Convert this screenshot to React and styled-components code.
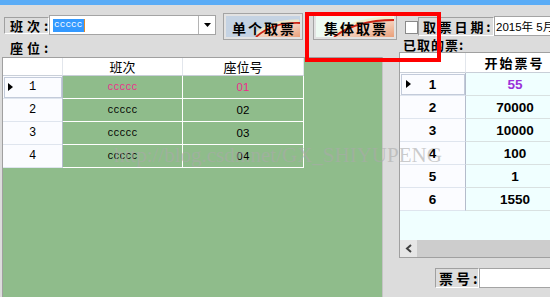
import React from "react";
import styled, { createGlobalStyle } from "styled-components";

const CJK = `"Noto Sans CJK SC", "Liberation Sans", sans-serif`;

const Global = createGlobalStyle`
  html, body { margin: 0; padding: 0; background: #dcdcdc; }
  body { font-family: "Liberation Sans", Arial, sans-serif; }
  #root { width: 550px; height: 297px; }
`;

const Window = styled.div`
  position: relative;
  width: 550px;
  height: 297px;
  overflow: hidden;
  background: #dcdcdc;
  display: flex;
  flex-direction: column;
`;

const TitleStrip = styled.div`
  height: 5px;
  flex-shrink: 0;
  background: #5aacf6;
`;

const Toolbar = styled.div`
  display: flex;
  align-items: flex-start;
  height: 35px;
  flex-shrink: 0;
`;

const SunkenLabel = styled.div`
  box-sizing: border-box;
  flex-shrink: 0;
  width: ${(p) => p.$w}px;
  height: ${(p) => p.$h}px;
  margin-top: ${(p) => p.$mt || 0}px;
  margin-left: ${(p) => p.$ml || 0}px;
  padding-left: ${(p) => p.$pl || 4}px;
  border-top: 1px solid #a0a0a0;
  border-left: 1px solid #a0a0a0;
  border-bottom: 1px solid #ffffff;
  border-right: 1px solid #ffffff;
  display: flex;
  align-items: center;
  font-family: ${CJK};
  font-weight: 700;
  font-size: ${(p) => p.$fs || 14}px;
  line-height: 1;
  letter-spacing: ${(p) => p.$ls || 0}px;
  color: #000;
  white-space: nowrap;
`;

const Combo = styled.div`
  box-sizing: border-box;
  flex-shrink: 0;
  width: 167px;
  height: 20px;
  margin-top: 10px;
  background: #fff;
  border: 1px solid #a4a4a4;
  display: flex;
`;

const ComboText = styled.div`
  flex: 1;
  display: flex;
  align-items: center;
  padding-left: 3px;
`;

const Selected = styled.span`
  display: inline-block;
  height: 13px;
  line-height: 12px;
  padding: 0 1px 0 1px;
  background: #3399ff;
  color: #fff;
  font-family: "Liberation Mono", monospace;
  font-size: 9.5px;
  border-right: 1px solid #e08a2c;
`;

const ComboArrow = styled.div`
  width: 16px;
  border-left: 1px solid #b4b4b4;
  display: flex;
  align-items: center;
  justify-content: center;
`;

const ImageButton = styled.button`
  box-sizing: border-box;
  flex-shrink: 0;
  width: ${(p) => p.$w}px;
  height: 27px;
  margin-left: ${(p) => p.$ml}px;
  margin-top: 8px;
  padding: 2px;
  border: 1px solid #a4a4a4;
  background: #e2e2e2;
  display: flex;
  cursor: pointer;
`;

const ButtonFace = styled.span`
  position: relative;
  flex: 1;
  overflow: hidden;
  background: ${(p) => p.$bg};
  display: flex;
  align-items: center;
  justify-content: center;
  font-family: ${CJK};
  font-weight: 700;
  font-size: 14px;
  letter-spacing: 2px;
  color: #000;
`;

const ButtonArt = styled.svg`
  position: absolute;
  left: 0;
  top: 0;
  width: 100%;
  height: 100%;
`;

const ButtonText = styled.span`
  position: relative;
  padding-top: 2px;
  padding-left: 2px;
  line-height: 1;
`;

const CheckBox = styled.span`
  box-sizing: border-box;
  flex-shrink: 0;
  width: 13px;
  height: 13px;
  margin-left: 8px;
  margin-top: 16px;
  background: #fff;
  border: 1px solid #8a8a8a;
`;

const DateBox = styled.div`
  box-sizing: border-box;
  flex-shrink: 0;
  width: 70px;
  height: 20px;
  margin-top: 11px;
  padding-left: 1px;
  background: #fff;
  border: 1px solid #a4a4a4;
  display: flex;
  align-items: center;
  font-family: "Liberation Sans", ${CJK};
  font-size: 11.5px;
  color: #000;
  white-space: nowrap;
`;

const Main = styled.div`
  flex: 1;
  display: flex;
  min-height: 0;
`;

const LeftCol = styled.div`
  width: 383px;
  flex-shrink: 0;
  display: flex;
  flex-direction: column;
`;

const PlainLabel = styled.div`
  height: ${(p) => p.$h}px;
  padding-left: ${(p) => p.$pl}px;
  font-family: ${CJK};
  font-weight: 700;
  font-size: 13px;
  line-height: ${(p) => p.$h - 2}px;
  letter-spacing: ${(p) => p.$ls}px;
  color: #000;
  white-space: nowrap;
`;

const GreenGrid = styled.div`
  flex: 1;
  margin-left: 2px;
  background: #8fbc8b;
  border-top: 1px solid #a0a0a0;
  border-left: 1px solid #a0a0a0;
  border-right: 1px solid #c4c4c4;
`;

const LeftTable = styled.div`
  display: grid;
  grid-template-columns: 60px 120px 121px;
  grid-auto-rows: 23px;
  grid-template-rows: 18px;
`;

const HeadCell = styled.div`
  box-sizing: border-box;
  background: #fff;
  border-right: 1px solid #e2e6ec;
  border-bottom: 1px solid #c9cfd8;
  display: flex;
  align-items: center;
  justify-content: center;
  font-family: ${CJK};
  font-size: ${(p) => p.$fs || 13}px;
  font-weight: ${(p) => p.$fw || 400};
  letter-spacing: ${(p) => p.$ls || 0}px;
  color: #000;
`;

const RowHead = styled.div`
  box-sizing: border-box;
  position: relative;
  background: #fbfcff;
  border-right: 1px solid #b4bccb;
  border-bottom: 1px solid #dfe5ee;
  outline: ${(p) => (p.$active ? "1px solid #c3cbda" : "none")};
  outline-offset: -2px;
  display: flex;
  align-items: center;
  justify-content: center;
  font-family: ${(p) => (p.$bold ? `"Liberation Sans", sans-serif` : `"Liberation Mono", monospace`)};
  font-weight: ${(p) => (p.$bold ? 700 : 400)};
  font-size: ${(p) => (p.$bold ? 13.5 : 12)}px;
  color: #000;
`;

const Pointer = styled.span`
  position: absolute;
  left: ${(p) => p.$left}px;
  top: 50%;
  margin-top: -4px;
  width: 0;
  height: 0;
  border-top: 4px solid transparent;
  border-bottom: 4px solid transparent;
  border-left: 5px solid #000;
`;

const GreenCell = styled.div`
  box-sizing: border-box;
  border-right: 1px solid #ffffff;
  border-bottom: 1px solid #ffffff;
  display: flex;
  align-items: center;
  justify-content: center;
  font-family: ${(p) => (p.$mono ? `"Liberation Mono", monospace` : `"Liberation Sans", sans-serif`)};
  font-size: ${(p) => (p.$mono ? 10 : 11.5)}px;
  color: ${(p) => (p.$hot ? "#ee2a8c" : "#000")};
`;

const RightCol = styled.div`
  margin-left: 16px;
  width: 180px;
  flex-shrink: 0;
  display: flex;
  flex-direction: column;
`;

const RightGrid = styled.div`
  box-sizing: border-box;
  height: 206px;
  border: 1px solid #a0a0a0;
  background: #f0ffff;
  display: flex;
  flex-direction: column;
`;

const RGRow = styled.div`
  display: grid;
  grid-template-columns: 66px 98px 1fr;
  height: ${(p) => p.$h}px;
  flex-shrink: 0;
`;

const AzureCell = styled.div`
  box-sizing: border-box;
  border-bottom: 1px solid #d9e1e1;
  display: flex;
  align-items: center;
  justify-content: center;
  font-family: "Liberation Sans", sans-serif;
  font-weight: 700;
  font-size: 13.5px;
  color: ${(p) => (p.$hot ? "#9b30d9" : "#000")};
`;

const Filler = styled.div`
  flex: 1;
`;

const ScrollBar = styled.div`
  height: 17px;
  flex-shrink: 0;
  display: flex;
  background: #cdcdcd;
`;

const ScrollArrow = styled.div`
  width: 17px;
  background: #e6e6e6;
  display: flex;
  align-items: center;
  justify-content: center;
`;

const TicketRow = styled.div`
  display: flex;
  margin-top: 10px;
  padding-left: 36px;
`;

const TextInput = styled.div`
  box-sizing: border-box;
  width: 90px;
  height: 20px;
  background: #fff;
  border: 1px solid #a4a4a4;
`;

const Watermark = styled.div`
  position: absolute;
  left: 114px;
  top: 143px;
  font-family: "Liberation Serif", serif;
  font-size: 21px;
  color: rgba(170, 170, 170, 0.6);
  white-space: nowrap;
  pointer-events: none;
`;

const Annotation = styled.div`
  position: absolute;
  left: 305px;
  top: 12px;
  width: 136px;
  height: 50px;
  box-sizing: border-box;
  border: 4px solid #ff0000;
  pointer-events: none;
`;

const seats = [
  { n: 1, cls: "ccccc", seat: "01", hot: true },
  { n: 2, cls: "ccccc", seat: "02" },
  { n: 3, cls: "ccccc", seat: "03" },
  { n: 4, cls: "ccccc", seat: "04" },
];

const tickets = [
  { n: 1, v: "55", hot: true },
  { n: 2, v: "70000" },
  { n: 3, v: "10000" },
  { n: 4, v: "100" },
  { n: 5, v: "1" },
  { n: 6, v: "1550" },
];

function Art({ id, d, w }) {
  return (
    <ButtonArt viewBox={`0 0 ${w} 21`} preserveAspectRatio="none">
      <defs>
        <linearGradient id={id} x1="0" y1="0" x2="1" y2="1">
          <stop offset="0" stopColor="#fbeee6" />
          <stop offset="0.55" stopColor="#f3cdb8" />
          <stop offset="1" stopColor="#eaa07a" />
        </linearGradient>
      </defs>
      <path d={`${d} L${w} 21 Z`} fill={`url(#${id})`} />
      <path d={d} stroke="#f5ecc4" strokeWidth="3" fill="none" transform="translate(-1 -2)" opacity="0.8" />
      <path d={d} stroke="#cc2414" strokeWidth="1.8" fill="none" />
    </ButtonArt>
  );
}

export default function App() {
  return (
    <>
      <Global />
      <Window>
        <TitleStrip />
        <Toolbar>
          <SunkenLabel $w={45} $h={17} $mt={12} $ml={4} $pl={5} $fs={13} $ls={4}>
            班次:
          </SunkenLabel>
          <Combo>
            <ComboText>
              <Selected>ccccc</Selected>
            </ComboText>
            <ComboArrow>
              <svg width="7" height="4" viewBox="0 0 7 4">
                <path d="M0 0 L7 0 L3.5 4 Z" fill="#000" />
              </svg>
            </ComboArrow>
          </Combo>
          <ImageButton $w={80} $ml={7}>
            <ButtonFace $bg="#c5d3e3">
              <Art id="g1" w={74} d="M30 21 Q 47 6 74 7" />
              <ButtonText>单个取票</ButtonText>
            </ButtonFace>
          </ImageButton>
          <ImageButton $w={84} $ml={10}>
            <ButtonFace $bg="#eefbf3">
              <Art id="g2" w={78} d="M18 21 Q 40 4 78 4" />
              <ButtonText>集体取票</ButtonText>
            </ButtonFace>
          </ImageButton>
          <CheckBox />
          <SunkenLabel $w={76} $h={19} $mt={12} $pl={4} $fs={13} $ls={2.8}>
            取票日期:
          </SunkenLabel>
          <DateBox>2015年 5月</DateBox>
        </Toolbar>
        <Main>
          <LeftCol>
            <PlainLabel $h={17} $pl={10} $ls={4}>
              座位:
            </PlainLabel>
            <GreenGrid>
              <LeftTable>
                <HeadCell />
                <HeadCell>班次</HeadCell>
                <HeadCell>座位号</HeadCell>
                {seats.map((s) => (
                  <React.Fragment key={s.n}>
                    <RowHead $active={s.hot}>
                      {s.hot && <Pointer $left={5} />}
                      {s.n}
                    </RowHead>
                    <GreenCell $mono $hot={s.hot}>
                      {s.cls}
                    </GreenCell>
                    <GreenCell $hot={s.hot}>{s.seat}</GreenCell>
                  </React.Fragment>
                ))}
              </LeftTable>
            </GreenGrid>
          </LeftCol>
          <RightCol>
            <PlainLabel $h={12} $pl={4} $ls={1}>
              已取的票:
            </PlainLabel>
            <RightGrid>
              <RGRow $h={20}>
                <HeadCell />
                <HeadCell $fw={700} $ls={2}>
                  开始票号
                </HeadCell>
                <HeadCell />
              </RGRow>
              {tickets.map((t) => (
                <RGRow key={t.n} $h={23}>
                  <RowHead $bold $active={t.hot}>
                    {t.hot && <Pointer $left={6} />}
                    {t.n}
                  </RowHead>
                  <AzureCell $hot={t.hot}>{t.v}</AzureCell>
                  <AzureCell />
                </RGRow>
              ))}
              <Filler />
              <ScrollBar>
                <ScrollArrow>
                  <svg width="8" height="9" viewBox="0 0 8 9">
                    <path d="M6 1 L2 4.5 L6 8" stroke="#404040" strokeWidth="2" fill="none" />
                  </svg>
                </ScrollArrow>
              </ScrollBar>
            </RightGrid>
            <TicketRow>
              <SunkenLabel $w={44} $h={20} $pl={3} $ls={3}>
                票号:
              </SunkenLabel>
              <TextInput />
            </TicketRow>
          </RightCol>
        </Main>
        <Watermark>http://blog.csdn.net/GX_SHIYUPENG</Watermark>
        <Annotation />
      </Window>
    </>
  );
}
